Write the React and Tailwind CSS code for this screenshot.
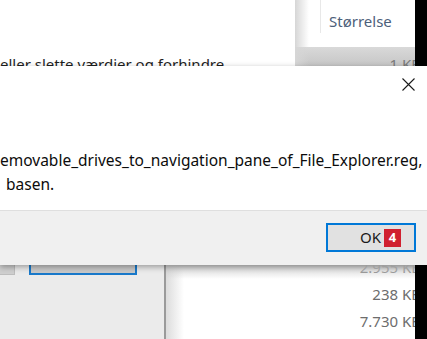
export default function App() {
    const font = { fontFamily: '"Noto Sans", "Open Sans", sans-serif' };
    return (
        <div className="w-[427px] h-[339px] overflow-hidden flex flex-col bg-white" style={font}>
            {/* background windows, upper strip */}
            <div className="flex h-[66px] shrink-0">
                <div className="w-[295px] overflow-hidden bg-white pt-[54px]">
                    <div className="whitespace-nowrap text-[15px] leading-[20px] text-[#1e1e1e]">
                        eller slette værdier og forhindre
                    </div>
                </div>
                <div className="relative w-[120px] flex flex-col bg-white">
                    <div className="absolute inset-y-0 left-0 w-[14px] bg-gradient-to-r from-[#d6d6d6] to-transparent" />
                    <div className="h-[47px] flex items-start">
                        <div className="ml-[25px] w-px h-[33px] bg-[#e8e8e8]" />
                        <div className="ml-[8px] mt-[11px] text-[15px] leading-[20px] text-[#4c607a]">
                            Størrelse
                        </div>
                    </div>
                    <div className="flex-1 flex justify-end overflow-hidden bg-gradient-to-b from-[#d9d9d9] to-[#c6c6c6]">
                        <div className="mt-[7px] whitespace-nowrap text-[15px] leading-[20px] text-[#7a7a7a] -mr-[6px]">
                            1 KB
                        </div>
                    </div>
                </div>
                <div className="flex-1 bg-black" />
            </div>

            {/* message dialog */}
            <div className="h-[199px] shrink-0 flex flex-col bg-white shadow-[0_2px_6px_rgba(0,0,0,0.35)] relative z-10">
                <div className="h-[38px] flex justify-end items-start pr-[12px] pt-[12px]">
                    <svg width="13" height="13" viewBox="0 0 13 13" className="text-[#1a1a1a]">
                        <path d="M0.5 0.5 L12.5 12.5 M12.5 0.5 L0.5 12.5" stroke="currentColor" strokeWidth="1.1" fill="none" />
                    </svg>
                </div>
                <div className="flex-1 pt-[44px] text-[15.5px] leading-[24px] text-[#0c0c0c]">
                    <div className="whitespace-nowrap">emovable_drives_to_navigation_pane_of_File_Explorer.reg,</div>
                    <div className="whitespace-nowrap pl-[6px]">basen.</div>
                </div>
                <div className="h-[55px] border-t border-[#dfdfdf] bg-[#f0f0f0] flex justify-end items-start pt-[12px] pr-[11px]">
                    <div className="w-[90px] h-[29px] border-2 border-[#0078d7] bg-[#e1e1e1] flex items-center justify-end pr-[13px] gap-[3px]">
                        <span className="text-[15px] leading-none text-[#1a1a1a]">OK</span>
                        <span className="w-[17px] h-[18px] bg-[#d0202f] text-white text-[13px] font-bold flex items-center justify-center leading-none">
                            4
                        </span>
                    </div>
                </div>
            </div>

            {/* background windows, lower strip */}
            <div className="flex flex-1">
                <div className="w-[164px] bg-[#ebebeb] flex items-start">
                    <div className="w-[15px] h-[10px] bg-[#cfcfcf] border-r border-b border-[#bdbdbd]" />
                    <div className="ml-[14px] w-[108px] h-[10px] border-2 border-t-0 border-[#1979ca] bg-[#c9c9c9]" />
                </div>
                <div className="w-[2px] bg-[#9a9a9a]" />
                <div className="relative flex-1 bg-white flex flex-col items-end overflow-hidden">
                    <div className="absolute inset-y-0 left-0 w-[18px] bg-gradient-to-r from-[#dcdcdc] to-transparent" />
                    <div className="absolute inset-x-0 top-0 h-[14px] bg-gradient-to-b from-[#d0d0d0] to-transparent" />
                    <div className="-mt-[11px] -mr-[6px] flex flex-col items-end text-[15px] leading-[27px] text-[#6d6d6d]">
                        <div>2.955 KB</div>
                        <div>238 KB</div>
                        <div>7.730 KB</div>
                    </div>
                </div>
                <div className="w-[12px] bg-black" />
            </div>
        </div>
    );
}
